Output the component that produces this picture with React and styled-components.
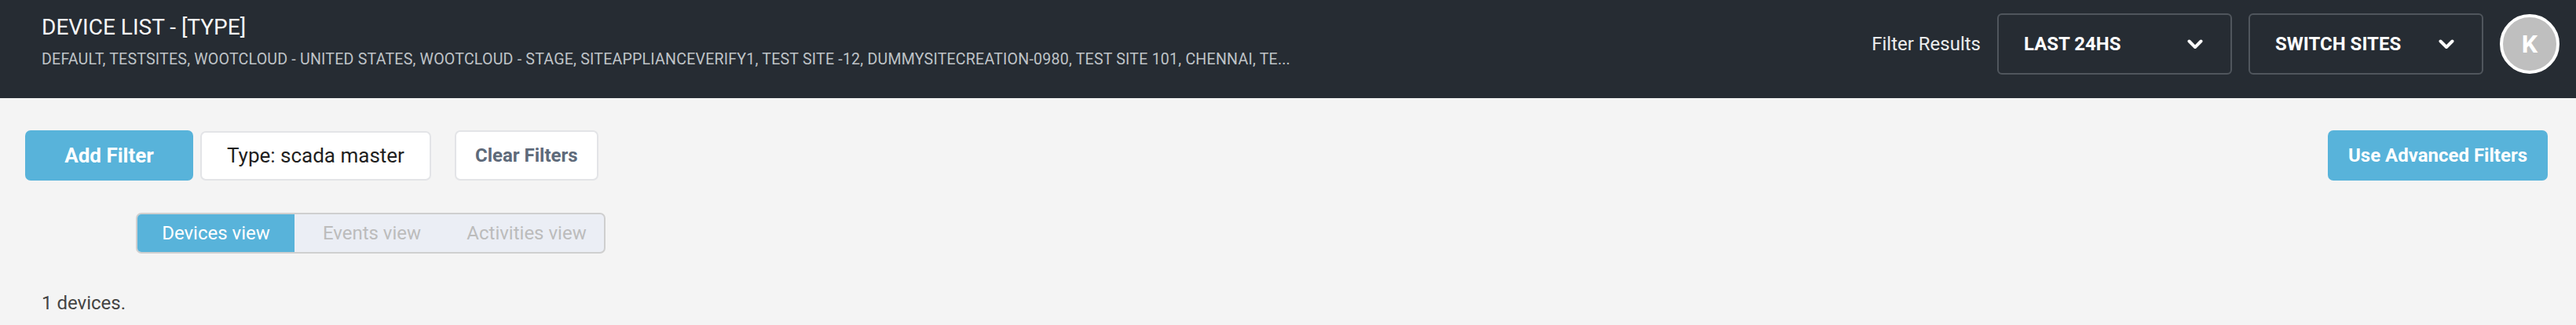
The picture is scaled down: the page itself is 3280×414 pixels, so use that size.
import React from 'react';
import styled, { createGlobalStyle } from 'styled-components';

const GlobalStyle = createGlobalStyle`
  html, body {
    margin: 0;
    padding: 0;
    background: #f4f4f4;
    font-family: Roboto, "Liberation Sans", Arial, sans-serif;
  }
  * {
    box-sizing: border-box;
  }
`;

const Header = styled.header`
  height: 125px;
  background: #262c33;
  display: flex;
  justify-content: space-between;
  align-items: flex-start;
  padding: 0 21px 0 53px;
`;

const TitleBlock = styled.div`
  padding-top: 18px;
`;

const Title = styled.h1`
  margin: 0;
  font-size: 28px;
  line-height: 34px;
  font-weight: 400;
  color: #f7f7f7;
`;

const Sites = styled.div`
  margin-top: 12px;
  font-size: 19.6px;
  letter-spacing: 0.2px;
  line-height: 24px;
  color: #bfc3c7;
  white-space: nowrap;
`;

const HeaderRight = styled.div`
  display: flex;
  align-items: center;
  gap: 21px;
  padding-top: 17px;
`;

const FilterLabel = styled.span`
  font-size: 24px;
  color: #eceded;
`;

const Dropdown = styled.button`
  width: 299px;
  height: 78px;
  display: flex;
  align-items: center;
  justify-content: space-between;
  padding: 0 35px 0 32px;
  background: transparent;
  border: 2px solid #50565d;
  border-radius: 6px;
  color: #fff;
  font-family: inherit;
  font-size: 24px;
  font-weight: 700;
`;

const Avatar = styled.div`
  width: 76px;
  height: 76px;
  border-radius: 50%;
  background: #bfbfbf;
  border: 4px solid #fff;
  display: flex;
  align-items: center;
  justify-content: center;
  color: #fff;
  font-size: 32px;
  font-weight: 700;
`;

const Main = styled.main`
  padding: 41px 36px 0 32px;
`;

const FilterBar = styled.div`
  display: flex;
  align-items: center;
  justify-content: space-between;
`;

const FilterGroup = styled.div`
  display: flex;
  align-items: center;
`;

const Button = styled.button`
  height: 64px;
  padding: 0 ${p => p.$pad || 24}px;
  min-width: ${p => p.$width || 0}px;
  border-radius: 7px;
  font-family: inherit;
  font-size: ${p => p.$size || 24}px;
  font-weight: 700;
  border: ${p => (p.$primary ? 'none' : '2px solid #e3e4e7')};
  background: ${p => (p.$primary ? '#58b3da' : '#fff')};
  color: ${p => (p.$primary ? '#fff' : '#5e6a7a')};
  margin-left: ${p => p.$gap || 0}px;
`;

const Chip = styled.div`
  height: 63px;
  display: flex;
  align-items: center;
  padding: 0 32px;
  margin-left: 9px;
  background: #fff;
  border: 2px solid #e3e4e7;
  border-radius: 7px;
  font-size: 26px;
  color: #1f1f1f;
`;

const Tabs = styled.div`
  margin: 41px 0 0 141px;
  width: 598px;
  height: 52px;
  display: grid;
  grid-template-columns: 200px 1fr 1fr;
  background: #ebeef5;
  border: 2px solid #cfcfcf;
  border-radius: 7px;
  overflow: hidden;
`;

const Tab = styled.div`
  display: flex;
  align-items: center;
  justify-content: center;
  font-size: 24px;
  background: ${p => (p.$active ? '#58b3da' : 'transparent')};
  color: ${p => (p.$active ? '#fff' : '#bcbcbc')};
`;

const Count = styled.p`
  margin: 49px 0 0 21px;
  font-size: 24px;
  color: #444;
`;

const Chevron = () => (
  <svg width="20" height="13" viewBox="0 0 20 13">
    <polyline points="2.5,2.5 10,10 17.5,2.5" fill="none" stroke="#fff" strokeWidth="4" strokeLinecap="round" strokeLinejoin="round" />
  </svg>
);

export default function App() {
  return (
    <>
      <GlobalStyle />
      <Header>
        <TitleBlock>
          <Title>DEVICE LIST - [TYPE]</Title>
          <Sites>
            DEFAULT, TESTSITES, WOOTCLOUD - UNITED STATES, WOOTCLOUD - STAGE, SITEAPPLIANCEVERIFY1, TEST SITE -12, DUMMYSITECREATION-0980, TEST SITE 101, CHENNAI, TE...
          </Sites>
        </TitleBlock>
        <HeaderRight>
          <FilterLabel>Filter Results</FilterLabel>
          <Dropdown>
            LAST 24HS
            <Chevron />
          </Dropdown>
          <Dropdown>
            SWITCH SITES
            <Chevron />
          </Dropdown>
          <Avatar>K</Avatar>
        </HeaderRight>
      </Header>
      <Main>
        <FilterBar>
          <FilterGroup>
            <Button $primary $width={214} $size={26}>Add Filter</Button>
            <Chip>Type: scada master</Chip>
            <Button $gap={30}>Clear Filters</Button>
          </FilterGroup>
          <Button $primary $width={280}>Use Advanced Filters</Button>
        </FilterBar>
        <Tabs>
          <Tab $active>Devices view</Tab>
          <Tab>Events view</Tab>
          <Tab>Activities view</Tab>
        </Tabs>
        <Count>1 devices.</Count>
      </Main>
    </>
  );
}
